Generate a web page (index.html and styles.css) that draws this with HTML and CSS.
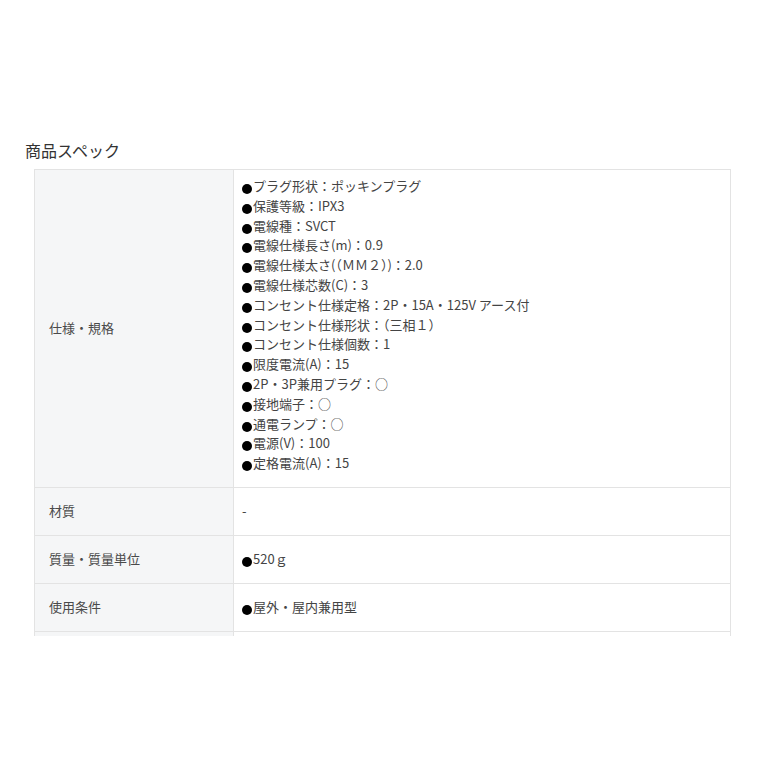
FILE: index.html
```html
<!DOCTYPE html>
<html>
<head>
    <meta charset="utf-8">
    <title>商品スペック</title>
    <link rel="stylesheet" href="styles.css">
</head>
<body>
    <div class="spec-section">
        <h2 class="spec-title">商品スペック</h2>
        <div class="spec-frame">
            <table class="spec-table">
                <tr>
                    <th>仕様・規格</th>
                    <td class="spec-list">
                        <div><span class="dot"></span>プラグ形状：ポッキンプラグ</div>
                        <div><span class="dot"></span>保護等級：IPX3</div>
                        <div><span class="dot"></span>電線種：SVCT</div>
                        <div><span class="dot"></span>電線仕様長さ(m)：0.9</div>
                        <div><span class="dot"></span>電線仕様太さ(（ＭＭ２）)：2.0</div>
                        <div><span class="dot"></span>電線仕様芯数(C)：3</div>
                        <div><span class="dot"></span>コンセント仕様定格：2P・15A・125V アース付</div>
                        <div><span class="dot"></span>コンセント仕様形状：（三相１）</div>
                        <div><span class="dot"></span>コンセント仕様個数：1</div>
                        <div><span class="dot"></span>限度電流(A)：15</div>
                        <div><span class="dot"></span>2P・3P兼用プラグ：○</div>
                        <div><span class="dot"></span>接地端子：○</div>
                        <div><span class="dot"></span>通電ランプ：○</div>
                        <div><span class="dot"></span>電源(V)：100</div>
                        <div><span class="dot"></span>定格電流(A)：15</div>
                    </td>
                </tr>
                <tr>
                    <th>材質</th>
                    <td>-</td>
                </tr>
                <tr>
                    <th>質量・質量単位</th>
                    <td><span class="dot"></span>520ｇ</td>
                </tr>
                <tr>
                    <th>使用条件</th>
                    <td><span class="dot"></span>屋外・屋内兼用型</td>
                </tr>
                <tr>
                    <th>&nbsp;</th>
                    <td>&nbsp;</td>
                </tr>
            </table>
        </div>
    </div>
</body>
</html>
```

FILE: styles.css
```css
body {
    margin: 0;
    background: #ffffff;
    font-family: "Noto Sans CJK JP", "Noto Sans", sans-serif;
    color: #444;
}

.spec-section {
    padding: 139px 0 0 25px;
}

.spec-title {
    margin: 0 0 8px 0;
    font-size: 16px;
    font-weight: normal;
    line-height: 22px;
    color: #333;
}

.spec-frame {
    margin-left: 9px;
    width: 697px;
    height: 467px;
    overflow: hidden;
}

.spec-table {
    width: 697px;
    border-collapse: collapse;
    border: 1px solid #e3e3e3;
    font-size: 13px;
}

.spec-table th,
.spec-table td {
    border: 1px solid #e3e3e3;
    text-align: left;
    vertical-align: middle;
    font-weight: normal;
    line-height: 20px;
    padding: 13px 8px 14px 8px;
}

.spec-table th {
    width: 176px;
    padding-left: 14px;
    background: #f5f6f7;
    color: #4a4a4a;
}

.spec-table .spec-list {
    padding-top: 6px;
    padding-bottom: 14px;
}

.spec-list div {
    height: 19.8px;
    line-height: 19.8px;
}

.dot {
    display: inline-block;
    width: 10px;
    height: 10px;
    margin-right: 1px;
    border-radius: 50%;
    background: #000;
    vertical-align: -3px;
}
```
